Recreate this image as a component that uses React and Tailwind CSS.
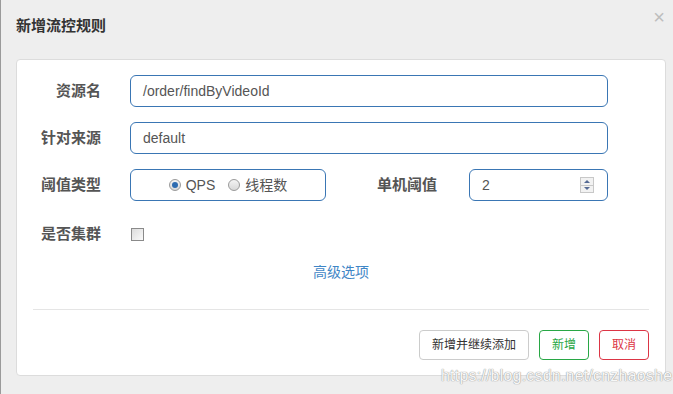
import React from 'react';

const cjk = { fontFamily: '"Liberation Sans", "Noto Sans CJK SC", sans-serif' };

const Radio = ({ checked }) => (
  <span className="inline-flex items-center justify-center w-[12px] h-[12px] rounded-full border border-[#9a9a9a] bg-gradient-to-b from-[#f4f4f4] to-[#d8d8d8]">
    {checked && <span className="w-[6px] h-[6px] rounded-full bg-[#2d6bb0]" />}
  </span>
);

const Label = ({ children }) => (
  <div className="w-[68px] text-right text-[15px] font-bold text-[#555] shrink-0 whitespace-nowrap">{children}</div>
);

export default function App() {
  return (
    <div className="relative w-[673px] h-[394px] bg-[#eeeeee] border-l border-[#9a9a9a] overflow-hidden" style={cjk}>
      <div className="flex items-center justify-between h-[52px] pl-[15px] pr-[8px]">
        <div className="text-[15px] font-bold text-[#333] pt-[1px]">新增流控规则</div>
        <div className="text-[20px] leading-none text-[#bdbdbd] -mt-[18px]">×</div>
      </div>
      <div className="mt-[7px] ml-[15px] w-[650px] h-[317px] bg-white border border-[#dcdcdc] rounded-[4px] pt-[15px] px-[16px]">
        <div className="flex items-center h-[32px]">
          <Label>资源名</Label>
          <div className="ml-[29px] w-[478px] h-[32px] border border-[#3a76b4] rounded-[6px] flex items-center px-[12px] text-[14px] text-[#555]">/order/findByVideoId</div>
        </div>
        <div className="flex items-center h-[32px] mt-[15px]">
          <Label>针对来源</Label>
          <div className="ml-[29px] w-[478px] h-[32px] border border-[#3a76b4] rounded-[6px] flex items-center px-[12px] text-[14px] text-[#555]">default</div>
        </div>
        <div className="flex items-center h-[32px] mt-[15px]">
          <Label>阈值类型</Label>
          <div className="ml-[29px] w-[196px] h-[32px] border border-[#3a76b4] rounded-[6px] flex items-center justify-center gap-[5px] text-[14px] text-[#555]">
            <Radio checked />
            <span>QPS</span>
            <span className="ml-[8px] flex"><Radio /></span>
            <span>线程数</span>
          </div>
          <div className="ml-[51px] text-[15px] font-bold text-[#555] whitespace-nowrap">单机阈值</div>
          <div className="ml-[32px] w-[139px] h-[32px] border border-[#3a76b4] rounded-[6px] flex items-center justify-between pl-[12px] pr-[13px] text-[14px] text-[#555]">
            <span>2</span>
            <span className="flex flex-col w-[14px] h-[16px] border border-[#c8c8c8] bg-[#f2f2f2]">
              <span className="flex-1 flex items-center justify-center border-b border-[#c8c8c8]">
                <span className="w-0 h-0 border-l-[3px] border-r-[3px] border-b-[3px] border-l-transparent border-r-transparent border-b-[#556a94]" />
              </span>
              <span className="flex-1 flex items-center justify-center">
                <span className="w-0 h-0 border-l-[3px] border-r-[3px] border-t-[3px] border-l-transparent border-r-transparent border-t-[#556a94]" />
              </span>
            </span>
          </div>
        </div>
        <div className="flex items-center h-[32px] mt-[15px] pt-[4px]">
          <Label>是否集群</Label>
          <span className="ml-[30px] w-[13px] h-[13px] border border-[#8a8a8a] bg-gradient-to-br from-[#dcdcdc] to-[#fafafa]" />
        </div>
        <div className="text-center text-[14px] text-[#3f86c6] mt-[14px] h-[20px] leading-[20px]">高级选项</div>
        <div className="mt-[27px] border-t border-[#e5e5e5]" />
        <div className="flex justify-end gap-[10px] mt-[20px] text-[12px]">
          <button className="h-[30px] w-[110px] border border-[#cccccc] rounded-[4px] bg-white text-[#333]">新增并继续添加</button>
          <button className="h-[30px] w-[50px] border border-[#28a745] rounded-[4px] bg-white text-[#28a745]">新增</button>
          <button className="h-[30px] w-[50px] border border-[#dc3545] rounded-[4px] bg-white text-[#dc3545]">取消</button>
        </div>
      </div>
      <div
        className="absolute left-[440px] top-[364px] text-[16px] text-[#f7f7f7] tracking-[0.2px]"
        style={{ fontFamily: '"Liberation Sans", sans-serif', textShadow: '0 0 1px #999, 0 0 1px #999' }}
      >
        https://blog.csdn.net/cnzhaoshe
      </div>
    </div>
  );
}
